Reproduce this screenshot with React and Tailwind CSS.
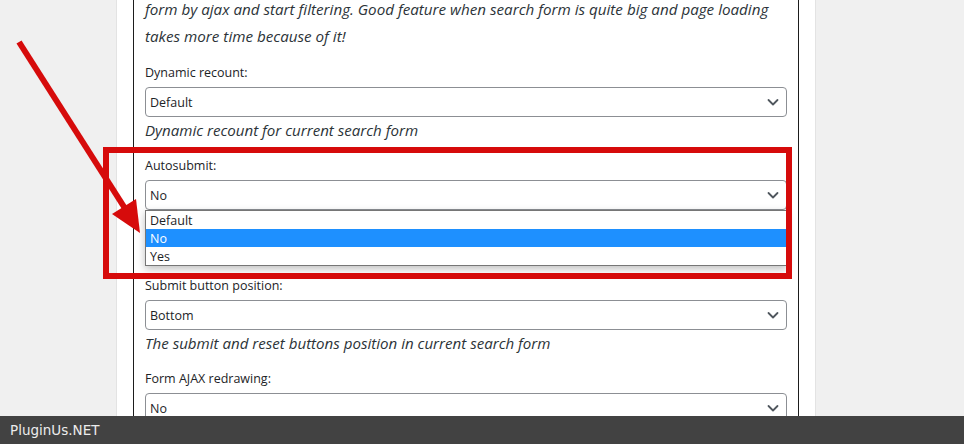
import React from "react";

function Chevron() {
  return (
    <svg width="14" height="14" viewBox="0 0 14 14" className="shrink-0">
      <path d="M2.5 5 L7 9.5 L11.5 5" fill="none" stroke="#50575e" strokeWidth="1.8" strokeLinecap="round" strokeLinejoin="round" />
    </svg>
  );
}

function Select({ value }) {
  return (
    <div className="h-[30px] w-full border border-[#8c8f94] rounded-[4px] bg-white flex items-center justify-between pl-[4px] pr-[6px] text-[12.5px] text-[#1d2327]">
      <span className="mt-[2px]">{value}</span>
      <Chevron />
    </div>
  );
}

function Field({ label, value, desc }) {
  return (
    <div className="mb-[14px]">
      <div className="text-[12.5px] leading-[20px] text-[#1d2327] mb-[4px]">{label}</div>
      <Select value={value} />
      {desc && (
        <div className="mt-[1px] text-[15.1px] leading-[24px] italic text-[#2c3338] whitespace-nowrap">{desc}</div>
      )}
    </div>
  );
}

export default function App() {
  return (
    <div
      className="relative w-[964px] h-[444px] overflow-hidden bg-[#f0f0f0]"
      style={{ fontFamily: '"Open Sans", "Noto Sans", sans-serif' }}
    >
      <div className="h-[416px] flex overflow-hidden">
        <div className="w-[116px] shrink-0" />
        <div className="w-[700px] shrink-0 bg-white border-x border-[#e3e3e3] px-[16px]">
          <div className="h-[430px] border-x border-[#1d1d1d] px-[11px]">
            <p className="mt-[-4px] mb-[13px] text-[15.2px] leading-[27px] italic text-[#2c3338] whitespace-nowrap">
              form by ajax and start filtering. Good feature when search form is quite big and page loading
              <br />
              takes more time because of it!
            </p>
            <Field label="Dynamic recount:" value="Default" desc="Dynamic recount for current search form" />
            <div className="mb-[14px]">
              <div className="text-[12.5px] leading-[20px] text-[#1d2327] mb-[4px]">Autosubmit:</div>
              <div className="relative">
                <Select value="No" />
                <div className="absolute left-0 right-0 top-full z-10 bg-white border border-[#767676] shadow-[0_3px_8px_rgba(0,0,0,0.25)] text-[12.5px] text-[#1d2327]">
                  <div className="h-[18px] leading-[19px] pl-[4px]">Default</div>
                  <div className="h-[18px] leading-[19px] pl-[4px] bg-[#1e90ff] text-white">No</div>
                  <div className="h-[18px] leading-[19px] pl-[4px]">Yes</div>
                </div>
              </div>
              <div className="h-[52px]" />
            </div>
            <Field label="Submit button position:" value="Bottom" desc="The submit and reset buttons position in current search form" />
            <Field label="Form AJAX redrawing:" value="No" />
          </div>
        </div>
        <div className="flex-1" />
      </div>

      <div className="h-[28px] bg-[#424242] flex items-center px-[10px]">
        <span className="text-[13.5px] text-[#ececec]" style={{ fontFamily: '"DejaVu Sans", sans-serif' }}>PluginUs.NET</span>
      </div>

      <div className="absolute left-[103px] top-[147px] w-[689px] h-[132px] border-[6px] border-[#d60b0b] pointer-events-none z-20" />

      <svg className="absolute left-0 top-0 pointer-events-none z-30" width="964" height="444" viewBox="0 0 964 444">
        <line x1="19" y1="42" x2="126" y2="210" stroke="#d60b0b" strokeWidth="6" strokeLinecap="butt" />
        <polygon points="140,233 112,214 136,199" fill="#d60b0b" />
      </svg>
    </div>
  );
}
